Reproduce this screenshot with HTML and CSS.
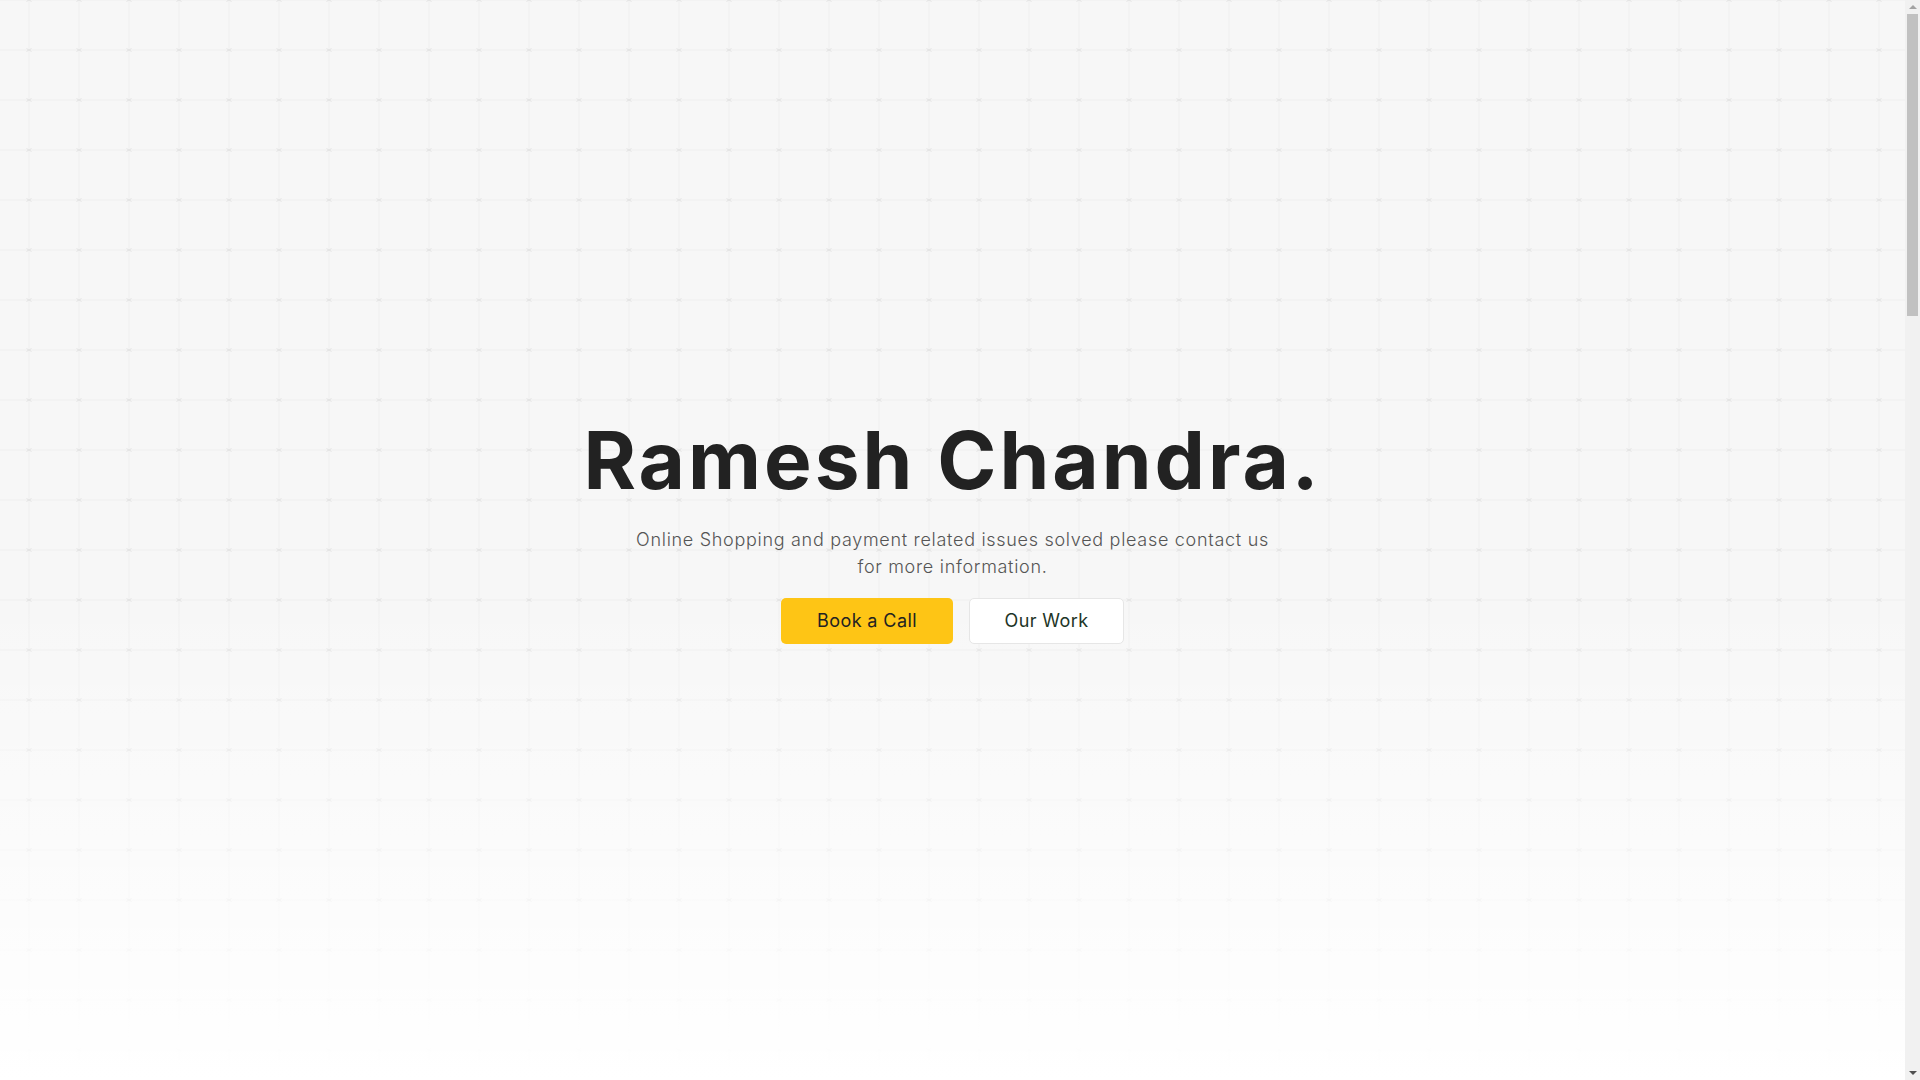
FILE: index.html
```html
<!DOCTYPE html>
<html lang="en">
<head>
<meta charset="utf-8">
<title>Ramesh Chandra</title>
<link rel="stylesheet" href="styles.css">
</head>
<body>
<main class="page">
  <section class="hero">
    <div class="hero-inner">
      <h1 class="hero-title">Ramesh Chandra.</h1>
      <p class="hero-text">Online Shopping and payment related issues solved please contact us<br>for more information.</p>
      <div class="hero-actions">
        <a class="btn btn-primary" href="#">Book a Call</a>
        <a class="btn btn-outline" href="#">Our Work</a>
      </div>
    </div>
  </section>
  <section class="below"></section>
</main>
<div class="scrollbar" aria-hidden="true">
  <span class="sb-arrow sb-up"></span>
  <span class="sb-thumb"></span>
  <span class="sb-track"></span>
  <span class="sb-arrow sb-down"></span>
</div>
</body>
</html>
```
FILE: styles.css
```css
html, body {
  margin: 0;
  padding: 0;
}
body {
  background: #ffffff;
  font-family: "Inter", "Open Sans", sans-serif;
  color: #222222;
}
.page {
  display: flex;
  flex-direction: column;
  margin-right: 15px;
}
.hero {
  height: 1080px;
  box-sizing: border-box;
  padding-bottom: 25px;
  display: flex;
  align-items: center;
  justify-content: center;
  background-color: #f7f7f7;
  background-image:
    linear-gradient(to bottom, rgba(255,255,255,0) 0%, rgba(255,255,255,0) 55%, #ffffff 100%),
    url("data:image/svg+xml;utf8,<svg xmlns='http://www.w3.org/2000/svg' width='50' height='50'><path d='M25 0V50M0 25H50' stroke='%23efefef' stroke-width='1' fill='none'/><path d='M22.5 23.5L27.5 26.5M22.5 26.5L27.5 23.5' stroke='%23e2e2e2' stroke-width='1' fill='none'/></svg>");
  background-size: 100% 100%, 50px 50px;
  background-position: 0 0, 3.5px 24.5px;
  background-repeat: no-repeat, repeat;
}
.hero-inner {
  display: flex;
  flex-direction: column;
  align-items: center;
  text-align: center;
}
.hero-title {
  margin: 0;
  font-size: 80px;
  line-height: 1.2;
  font-weight: 700;
  letter-spacing: 3px;
  color: #222222;
}
.hero-text {
  margin: 18px 0 0;
  font-size: 18px;
  line-height: 27px;
  font-weight: 300;
  letter-spacing: 0.7px;
  color: #555555;
}
.hero-actions {
  display: flex;
  align-items: center;
  gap: 16px;
  margin-top: 18px;
}
.btn {
  display: inline-flex;
  align-items: center;
  justify-content: center;
  height: 46px;
  box-sizing: border-box;
  border-radius: 5px;
  font-size: 18px;
  font-weight: 400;
  letter-spacing: 0.4px;
  text-decoration: none;
}
.btn-primary {
  width: 172px;
  background: #fec515;
  color: #222222;
}
.btn-outline {
  width: 155px;
  background: #ffffff;
  border: 1px solid #e6e6e6;
  color: #1d3526;
}
.below {
  height: 2670px;
  background: #ffffff;
}
.scrollbar {
  position: fixed;
  top: 0;
  right: 0;
  width: 15px;
  height: 100vh;
  background: #f1f1f1;
  display: flex;
  flex-direction: column;
  align-items: center;
}
.sb-arrow {
  width: 0;
  height: 0;
  border-left: 4px solid transparent;
  border-right: 4px solid transparent;
}
.sb-up {
  margin: 5px 0 5px;
  border-bottom: 4px solid #a3a3a3;
}
.sb-down {
  margin: 5px 0 5px;
  border-top: 4px solid #505050;
}
.sb-thumb {
  width: 11px;
  height: 302px;
  background: #c1c1c1;
}
.sb-track {
  flex: 1;
}
```
